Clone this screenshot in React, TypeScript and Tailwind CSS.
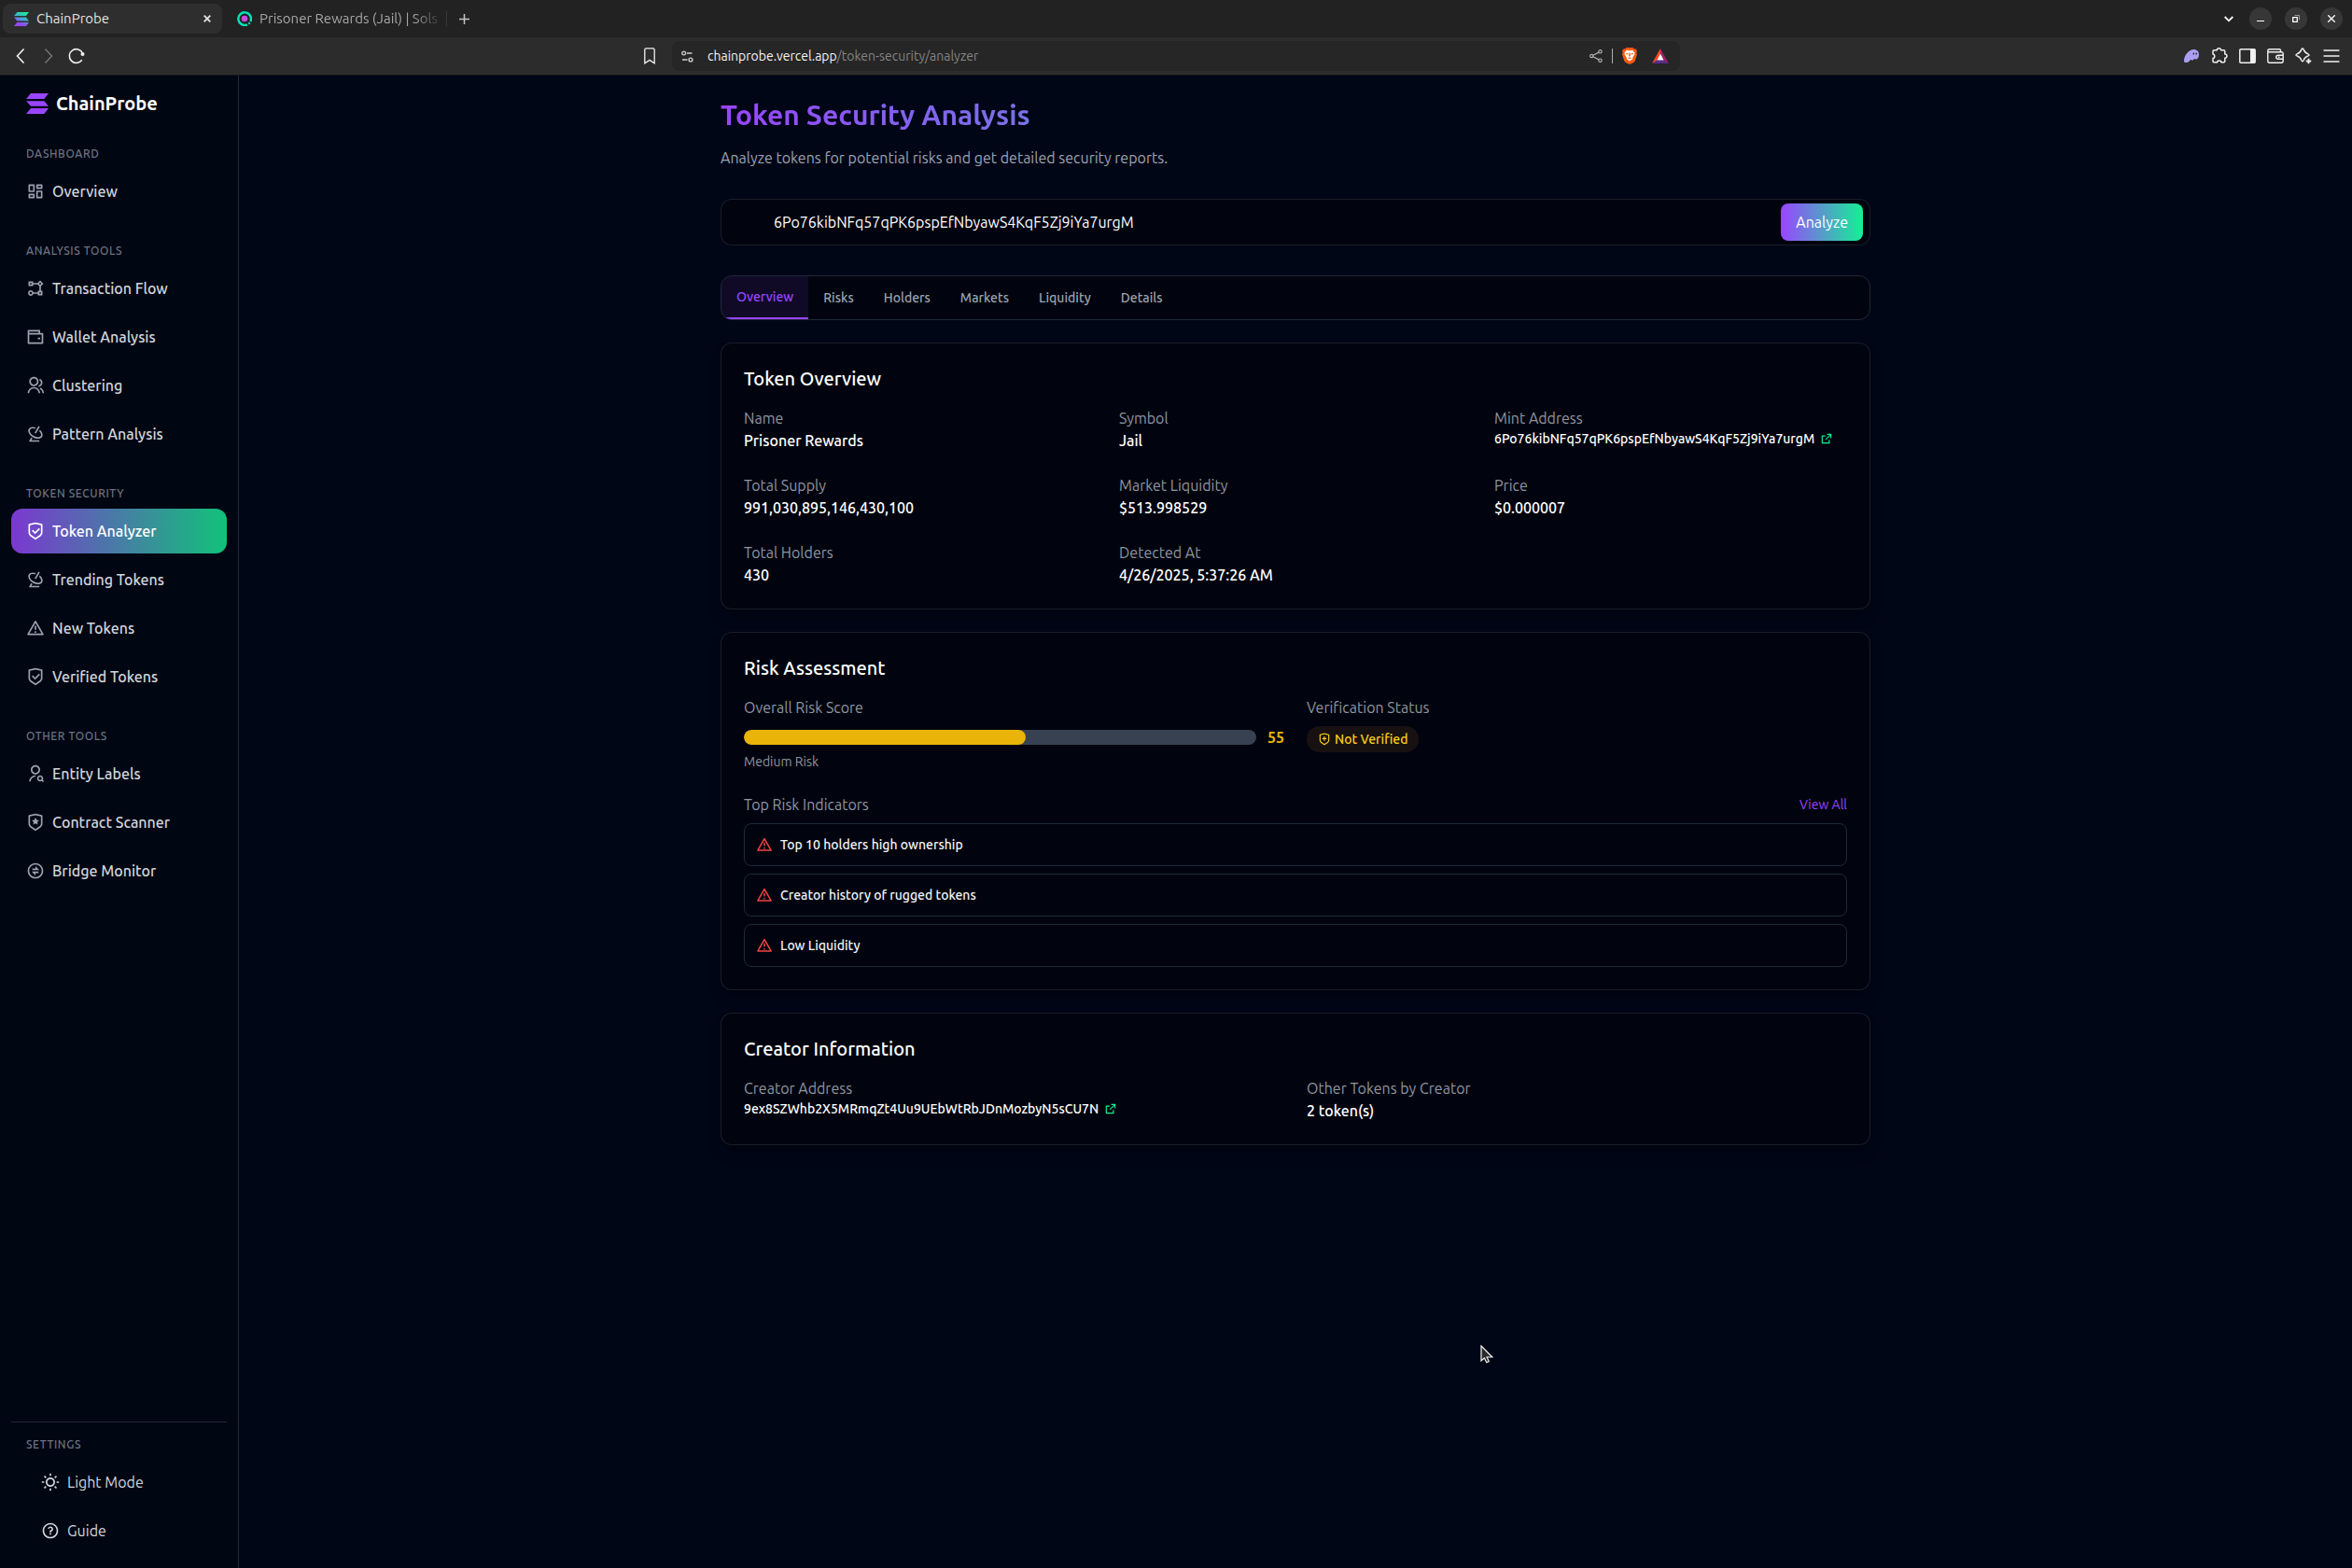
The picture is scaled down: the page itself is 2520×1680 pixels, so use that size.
import { useState } from 'react'
import type { ReactNode } from 'react'
import type { IconType } from 'react-icons'
import {
  RiAlertLine,
  RiDashboardLine,
  RiExchangeLine,
  RiExternalLinkLine,
  RiFlowChart,
  RiGroupLine,
  RiQuestionLine,
  RiRadarLine,
  RiShieldCheckLine,
  RiShieldCrossLine,
  RiShieldStarLine,
  RiSunLine,
  RiUserSearchLine,
  RiWalletLine,
} from 'react-icons/ri'

interface NavItem {
  readonly label: string
  readonly icon: IconType
}

interface NavSection {
  readonly title: string
  readonly items: readonly NavItem[]
}

const NAV_SECTIONS: readonly NavSection[] = [
  { title: 'Dashboard', items: [{ label: 'Overview', icon: RiDashboardLine }] },
  {
    title: 'Analysis Tools',
    items: [
      { label: 'Transaction Flow', icon: RiFlowChart },
      { label: 'Wallet Analysis', icon: RiWalletLine },
      { label: 'Clustering', icon: RiGroupLine },
      { label: 'Pattern Analysis', icon: RiRadarLine },
    ],
  },
  {
    title: 'Token Security',
    items: [
      { label: 'Token Analyzer', icon: RiShieldCheckLine },
      { label: 'Trending Tokens', icon: RiRadarLine },
      { label: 'New Tokens', icon: RiAlertLine },
      { label: 'Verified Tokens', icon: RiShieldCheckLine },
    ],
  },
  {
    title: 'Other Tools',
    items: [
      { label: 'Entity Labels', icon: RiUserSearchLine },
      { label: 'Contract Scanner', icon: RiShieldStarLine },
      { label: 'Bridge Monitor', icon: RiExchangeLine },
    ],
  },
]

const TABS = ['Overview', 'Risks', 'Holders', 'Markets', 'Liquidity', 'Details']

const RISKS = ['Top 10 holders high ownership', 'Creator history of rugged tokens', 'Low Liquidity']

const MINT_ADDRESS = '6Po76kibNFq57qPK6pspEfNbyawS4KqF5Zj9iYa7urgM'
const CREATOR_ADDRESS = '9ex8SZWhb2X5MRmqZt4Uu9UEbWtRbJDnMozbyN5sCU7N'
const RISK_SCORE = 55

function SolanaMark({ className, gradient }: { readonly className: string; readonly gradient?: boolean }) {
  return (
    <svg viewBox="0 0 24 22" className={className} fill={gradient ? 'url(#mark-gradient)' : '#9945ff'} preserveAspectRatio="none">
      {gradient && (
        <defs>
          <linearGradient id="mark-gradient" gradientUnits="userSpaceOnUse" x1="18" y1="0" x2="8" y2="22">
            <stop offset="0" stopColor="#14f195" />
            <stop offset="0.5" stopColor="#4aa3d0" />
            <stop offset="0.75" stopColor="#8a52f5" />
            <stop offset="1" stopColor="#9945ff" />
          </linearGradient>
        </defs>
      )}
      <path d="M5 0h19l-4.600 6H0z" />
      <path d="M0 8.200h19.400L24 13.800H5z" />
      <path d="M5 16h19l-4.600 6H0z" />
    </svg>
  )
}

function BraveMark() {
  return (
    <svg width="16" height="18" viewBox="0 0 16 18">
      <path d="M4.500 0h7l1.300 1.500 1.500-.2L16 3.400l-.6 2L16 7l-2.200 7.300-1.500 1.700L8 18l-4.300-2-1.500-1.700L0 7l.6-1.600-.6-2 1.700-2.100 1.500.2z" fill="#fb5a12" />
      <path d="M4.800 2.800 8 3.300l3.200-.5 2.300 2.600-.4 2.300-2 3 .3 1.400-3.400 2.300-3.400-2.300.3-1.400-2-3-.4-2.300z" fill="#fff" />
      <path d="M3.800 6 6.600 6.300 6.200 7.400 4.600 7.200zM12.200 6 9.400 6.300 9.800 7.400 11.400 7.200zM7.500 5.400h1L8.900 9 8 9.800 7.100 9zM5.600 11 8 10.600 10.400 11 8 12z" fill="#fb5a12" />
    </svg>
  )
}

function BatMark() {
  return (
    <svg width="18" height="16" viewBox="0 0 18 16">
      <path d="M9 0 0 16l5.500-3.600L9 5.600z" fill="#ff4724" />
      <path d="M9 0v5.600l3.500 6.800L18 16z" fill="#9e1f63" />
      <path d="m0 16 5.500-3.600h7L18 16z" fill="#5b2d8c" />
      <path d="m9 5.600 3.600 6.800H5.400z" fill="#fff" />
    </svg>
  )
}

interface ChromeButtonProps {
  readonly label: string
  readonly className?: string
  readonly children: ReactNode
}

function ChromeButton({ label, className = '', children }: ChromeButtonProps) {
  return (
    <button type="button" aria-label={label} className={`flex items-center justify-center cursor-pointer ${className}`}>
      {children}
    </button>
  )
}

function TabStrip() {
  return (
    <div className="flex h-10 items-center bg-[#222222] pl-[3px] pr-2.5 text-[#e3e3e3]">
      <div className="flex h-8 w-[235px] items-center rounded-lg bg-[#2e2e2e] pl-3 pr-2">
        <SolanaMark className="h-[15px] w-4 shrink-0" gradient />
        <span className="ml-2 flex-1 text-[15px]">ChainProbe</span>
        <ChromeButton label="Close tab" className="h-4 w-4">
          <svg width="8" height="8" viewBox="0 0 8 8" stroke="currentColor" strokeWidth="1.800">
            <path d="m.7.7 6.600 6.600M7.300.7.7 7.300" />
          </svg>
        </ChromeButton>
      </div>
      <div className="flex h-8 w-[241px] items-center pl-4">
        <svg width="16" height="16" viewBox="0 0 16 16" className="shrink-0" fill="none">
          <path d="M11 14.300A6.800 6.800 0 1 1 14.300 11" stroke="#00e5b8" strokeWidth="2.400" />
          <path d="m12.300 12.300 1.500 1.500" stroke="#00e5b8" strokeWidth="2.200" />
          <circle cx="8" cy="8" r="3.300" fill="#c74ae3" />
        </svg>
        <span className="ml-2 whitespace-nowrap text-[15px] text-[#a8a8a8] [mask-image:linear-gradient(to_right,#000_86%,#0003)]">
          Prisoner Rewards (Jail) | Sols
        </span>
        <span className="ml-auto h-4 w-px bg-[#383838]" />
      </div>
      <ChromeButton label="New tab" className="ml-1.5 h-6 w-6 text-[#c4c4c4]">
        <svg width="11" height="11" viewBox="0 0 11 11" stroke="currentColor" strokeWidth="1.500">
          <path d="M5.500 0v11M0 5.500h11" />
        </svg>
      </ChromeButton>
      <div className="ml-auto flex items-center gap-3.5 text-white">
        <ChromeButton label="Search tabs" className="-mr-1 h-6 w-6">
          <svg width="10" height="7" viewBox="0 0 10 7" fill="none" stroke="currentColor" strokeWidth="1.800">
            <path d="m.7 1 4.300 4.300L9.300 1" />
          </svg>
        </ChromeButton>
        <ChromeButton label="Minimize" className="h-6 w-6 rounded-full bg-[#373737]">
          <svg width="8" height="8" viewBox="0 0 8 8" stroke="currentColor">
            <path d="M0 6.500h8" />
          </svg>
        </ChromeButton>
        <ChromeButton label="Restore" className="h-6 w-6 rounded-full bg-[#373737]">
          <svg width="8" height="8" viewBox="0 0 8 8" fill="none" stroke="currentColor">
            <path d="M.7 2.700h4.600v4.600H.7z" strokeWidth="1.300" />
            <path d="M2.500.5h5v5" strokeOpacity="0.500" />
          </svg>
        </ChromeButton>
        <ChromeButton label="Close window" className="h-6 w-6 rounded-full bg-[#373737]">
          <svg width="8" height="8" viewBox="0 0 8 8" stroke="currentColor" strokeWidth="1.300">
            <path d="m.3.3 7.400 7.400M7.700.3.3 7.700" />
          </svg>
        </ChromeButton>
      </div>
    </div>
  )
}

function Toolbar() {
  return (
    <div className="flex h-[41px] items-center border-b border-[#161616] bg-[#2c2c2c] px-2.5 text-[#f0f0f0]">
      <div className="flex flex-1 items-center">
        <ChromeButton label="Back" className="h-6 w-6">
          <svg width="10" height="16" viewBox="0 0 10 16" fill="none" stroke="currentColor" strokeWidth="1.600">
            <path d="M8.500.5 1.500 8l7 7.500" />
          </svg>
        </ChromeButton>
        <ChromeButton label="Forward" className="ml-1.5 h-6 w-6 text-[#777777]">
          <svg width="10" height="16" viewBox="0 0 10 16" fill="none" stroke="currentColor" strokeWidth="1.400">
            <path d="m1.500.5 7 7.500-7 7.500" />
          </svg>
        </ChromeButton>
        <ChromeButton label="Reload" className="ml-1.5 h-6 w-6">
          <svg width="18" height="18" viewBox="0 0 18 18" fill="none" stroke="currentColor" strokeWidth="1.600">
            <path d="M14.800 13.300A7.400 7.400 0 1 1 15.600 6.200" />
            <circle cx="15.500" cy="7" r="2" fill="currentColor" stroke="none" />
          </svg>
        </ChromeButton>
        <ChromeButton label="Bookmark this tab" className="mr-3 ml-auto h-6 w-6">
          <svg width="12" height="18" viewBox="0 0 12 18" fill="none" stroke="currentColor" strokeWidth="1.300">
            <path d="M2.200.8h7.600c.8 0 1.400.6 1.400 1.400v14.600L6 13.400.8 16.800V2.200C.8 1.400 1.400.8 2.200.8z" />
          </svg>
        </ChromeButton>
      </div>
      <div className="flex h-8 shrink basis-[1080px] items-center rounded-lg bg-[#262626] pr-3 pl-2.5">
        <svg width="13" height="13" viewBox="0 0 13 13" fill="none" stroke="#d0d0d0" strokeWidth="1.400">
          <circle cx="2.700" cy="3" r="1.900" />
          <path d="M6 3h5.500M1 10h5.500" />
          <circle cx="10" cy="10" r="1.900" />
        </svg>
        <p className="ml-[15px] flex-1 text-sm text-[#858585]">
          <span className="text-[#f5f5f5]">chainprobe.vercel.app</span>/token-security/analyzer
        </p>
        <div className="flex items-center gap-2.5">
          <svg width="14" height="14" viewBox="0 0 14 14" fill="none" stroke="#b0b0b0" strokeWidth="1.200">
            <circle cx="2.300" cy="7" r="1.600" />
            <circle cx="11.500" cy="2.300" r="1.700" />
            <circle cx="11.500" cy="11.700" r="1.700" />
            <path d="m3.800 6.300 6.200-3.200M3.800 7.700l6.200 3.200" />
          </svg>
          <span className="h-4 w-px bg-[#b0b0b0]" />
          <BraveMark />
          <span className="pl-1.5">
            <BatMark />
          </span>
        </div>
      </div>
      <div className="flex flex-1 items-center justify-end gap-1.5">
        <ChromeButton label="Wallet extension" className="h-6 w-6">
          <svg width="16" height="14" viewBox="0 0 16 14">
            <path d="M0 12.400C0 7 4.600 0 10.500 0 14 0 16 2.300 16 5.200c0 3.300-1.600 5.300-3 5.300-.9 0-1.100-.6-1.600-.6-.7 0-1.200 1.700-2.600 1.700-.9 0-1-.7-1.500-.7-.8 0-1.800 3-4.600 3C1.100 13.900 0 13.500 0 12.400z" fill="#ab9ff2" />
            <ellipse cx="10.300" cy="4.600" rx="0.800" ry="1.100" fill="#2c2c2c" />
            <ellipse cx="13.200" cy="4.600" rx="0.800" ry="1.100" fill="#2c2c2c" />
          </svg>
        </ChromeButton>
        <ChromeButton label="Extensions" className="h-6 w-6">
          <svg width="18" height="18" viewBox="0 0 18 18" fill="none" stroke="currentColor" strokeWidth="1.500" strokeLinejoin="round">
            <path d="M3.200 2.800h3.100c0-2.700 4.300-2.700 4.300 0h3c.7 0 1.200.5 1.200 1.200v2.900c2.900 0 2.900 4.400 0 4.400v3.300c0 .7-.5 1.200-1.200 1.200h-2.700c0-2.300-4.300-2.300-4.300 0H3.200c-.7 0-1.200-.5-1.200-1.200v-3.100c2.400 0 2.400-4.400 0-4.400V4c0-.7.5-1.200 1.200-1.200z" />
          </svg>
        </ChromeButton>
        <ChromeButton label="Side panel" className="h-6 w-6">
          <svg width="18" height="16" viewBox="0 0 18 16" fill="none">
            <rect x="0.800" y="0.800" width="16.400" height="14.400" rx="1" stroke="currentColor" strokeWidth="1.500" />
            <path d="M12 1h5v14h-5z" fill="currentColor" />
          </svg>
        </ChromeButton>
        <ChromeButton label="Wallet" className="h-6 w-6">
          <svg width="18" height="16" viewBox="0 0 18 16" fill="none" stroke="currentColor" strokeWidth="1.400">
            <path d="M14.500 3.800V2c0-.7-.5-1.200-1.200-1.200H2.500C1.600.8.800 1.500.8 2.400v10.800c0 1.100.8 2 1.900 2h12.600c1 0 1.900-.9 1.900-2V5.500c0-1-.8-1.700-1.800-1.700H2.500C1.600 3.800.8 3.200.8 2.400" />
            <path d="M17 7.200h-5c-1.200 0-2.200.8-2.200 2s1 2 2.200 2h5M12 9.200h1.500" />
          </svg>
        </ChromeButton>
        <ChromeButton label="Assistant" className="h-6 w-6">
          <svg width="18" height="18" viewBox="0 0 18 18" fill="none" stroke="currentColor" strokeWidth="1.400" strokeLinejoin="round">
            <path d="M8 1c.5 0 .8.300 1 .8 1 3 2 4.100 5 5.100 1.300.4 1.300 1.600 0 2-3 1-4 2-5 5-.4 1.300-1.600 1.300-2 0-1-3-2-4-5-5-1.300-.4-1.300-1.600 0-2 3-1 4-2.100 5-5.100.2-.5.500-.8 1-.8z" />
            <path d="M14.500 11.800v5.400M11.800 14.500h5.400" strokeWidth="1.800" />
          </svg>
        </ChromeButton>
        <ChromeButton label="Menu" className="h-6 w-6">
          <svg width="18" height="14" viewBox="0 0 18 14" stroke="currentColor" strokeWidth="1.500">
            <path d="M.5 1h17M.5 7h17M.5 13h17" />
          </svg>
        </ChromeButton>
      </div>
    </div>
  )
}

function SectionTitle({ children }: { readonly children: ReactNode }) {
  return <h3 className="mb-2 px-4 text-xs font-medium uppercase tracking-wider text-[#6b7280]">{children}</h3>
}

function Sidebar() {
  return (
    <aside className="flex w-64 shrink-0 flex-col border-r border-[#1f2937] bg-[#010613]">
      <div className="flex h-[60px] items-center gap-2 px-7">
        <SolanaMark className="h-[22px] w-6" />
        <span className="text-xl font-bold text-white">ChainProbe</span>
      </div>
      <nav className="flex flex-1 flex-col gap-8 px-3 py-4">
        {NAV_SECTIONS.map((section) => (
          <div key={section.title}>
            <SectionTitle>{section.title}</SectionTitle>
            <ul className="flex flex-col gap-1">
              {section.items.map(({ label, icon: Icon }) => {
                const active = label === 'Token Analyzer'
                return (
                  <li key={label}>
                    <a
                      href="#"
                      aria-current={active ? 'page' : undefined}
                      className={`flex h-12 items-center gap-2 rounded-xl px-4 font-medium ${
                        active ? 'bg-linear-to-r/srgb from-[#7b38d0] to-[#12c27a] text-white' : 'text-[#d1d5db]'
                      }`}
                    >
                      <Icon size={20} className={active ? 'text-white' : 'text-[#9ca3af]'} />
                      {label}
                    </a>
                  </li>
                )
              })}
            </ul>
          </div>
        ))}
      </nav>
      <div className="mx-3 border-t border-[#1f2937] py-4">
        <SectionTitle>Settings</SectionTitle>
        <div className="flex flex-col gap-1 px-4 text-[#d1d5db]">
          <button type="button" className="flex h-12 items-center gap-2 px-4 cursor-pointer">
            <RiSunLine size={20} />
            Light Mode
          </button>
          <button type="button" className="flex h-12 items-center gap-2 px-4 cursor-pointer">
            <RiQuestionLine size={20} />
            Guide
          </button>
        </div>
      </div>
    </aside>
  )
}

function Card({ title, children }: { readonly title: string; readonly children: ReactNode }) {
  return (
    <section className="rounded-xl border border-white/10 bg-[#01040f] p-6 shadow-lg shadow-black/30">
      <h2 className="mb-4 text-xl font-medium text-white">{title}</h2>
      {children}
    </section>
  )
}

interface FieldProps {
  readonly label: string
  readonly value: string
  readonly address?: boolean
}

function Field({ label, value, address }: FieldProps) {
  return (
    <div className="h-12">
      <p className="text-[#9095a0]">{label}</p>
      {address ? (
        <p className="flex items-center gap-1.5 text-sm font-medium text-white">
          {value}
          <a href="#" aria-label={`Open ${label}`} className="text-[#14f195]">
            <RiExternalLinkLine size={14} />
          </a>
        </p>
      ) : (
        <p className="font-medium text-white">{value}</p>
      )}
    </div>
  )
}

function Analyzer() {
  const [address, setAddress] = useState(MINT_ADDRESS)
  const [tab, setTab] = useState('Overview')

  return (
    <main className="min-w-0 flex-1">
      <div className="mx-auto max-w-7xl p-6">
        <h1 className="mb-4 bg-linear-to-r/srgb from-[#9945ff] to-[#14f195] bg-clip-text text-3xl font-bold text-transparent">
          Token Security Analysis
        </h1>
        <p className="mb-8 text-[#9ca3af]">Analyze tokens for potential risks and get detailed security reports.</p>

        <form
          onSubmit={(e) => e.preventDefault()}
          className="mb-8 flex h-[50px] items-center rounded-xl border border-white/10 bg-[#01040f] pr-[7px]"
        >
          <input
            type="text"
            aria-label="Token address"
            value={address}
            onChange={(e) => setAddress(e.target.value)}
            className="min-w-0 flex-1 bg-transparent pl-14 text-white focus:outline-none"
          />
          <button
            type="submit"
            className="h-10 rounded-lg bg-linear-to-r/srgb from-[#9945ff] to-[#14f195] px-4 text-white cursor-pointer"
          >
            Analyze
          </button>
        </form>

        <div role="tablist" className="mb-6 flex overflow-hidden rounded-xl border border-[#1f2937] bg-[#01040f]">
          {TABS.map((name) => (
            <button
              key={name}
              type="button"
              role="tab"
              aria-selected={tab === name}
              onClick={() => setTab(name)}
              className={`px-4 py-3 text-sm font-medium cursor-pointer ${
                tab === name ? 'border-b-2 border-[#9945ff] bg-[#9945ff]/10 text-[#9945ff]' : 'text-[#9ca3af]'
              }`}
            >
              {name}
            </button>
          ))}
        </div>

        <div className="flex flex-col gap-6">
          <Card title="Token Overview">
            <div className="grid grid-cols-3 gap-6">
              <Field label="Name" value="Prisoner Rewards" />
              <Field label="Symbol" value="Jail" />
              <Field label="Mint Address" value={MINT_ADDRESS} address />
              <Field label="Total Supply" value="991,030,895,146,430,100" />
              <Field label="Market Liquidity" value="$513.998529" />
              <Field label="Price" value="$0.000007" />
              <Field label="Total Holders" value="430" />
              <Field label="Detected At" value="4/26/2025, 5:37:26 AM" />
            </div>
          </Card>

          <Card title="Risk Assessment">
            <div className="mb-6 grid grid-cols-2 gap-6">
              <div>
                <p className="mb-2 text-[#9095a0]">Overall Risk Score</p>
                <div className="flex items-center gap-3">
                  <div className="h-4 flex-1 overflow-hidden rounded-full bg-[#374151]">
                    <div className="h-full rounded-full bg-[#eab308]" style={{ width: `${RISK_SCORE}%` }} />
                  </div>
                  <span className="font-bold text-[#eab308]">{RISK_SCORE}</span>
                </div>
                <p className="mt-1 text-sm text-[#9095a0]">Medium Risk</p>
              </div>
              <div>
                <p className="mb-2 text-[#9095a0]">Verification Status</p>
                <span className="inline-flex items-center gap-1 rounded-full bg-[#181112] px-3 py-1 text-sm font-medium text-[#facc15]">
                  <RiShieldCrossLine size={14} />
                  Not Verified
                </span>
              </div>
            </div>
            <div className="mb-2 flex items-center justify-between">
              <p className="text-[#9095a0]">Top Risk Indicators</p>
              <a href="#" className="text-sm text-[#9945ff]">
                View All
              </a>
            </div>
            <ul className="flex flex-col gap-2">
              {RISKS.map((risk) => (
                <li key={risk} className="flex items-center gap-2 rounded-lg border border-[#1f2937] p-3 text-sm font-medium text-[#f3f4f6]">
                  <RiAlertLine size={18} className="text-[#ef4444]" />
                  {risk}
                </li>
              ))}
            </ul>
          </Card>

          <Card title="Creator Information">
            <div className="grid grid-cols-2 gap-6">
              <Field label="Creator Address" value={CREATOR_ADDRESS} address />
              <Field label="Other Tokens by Creator" value="2 token(s)" />
            </div>
          </Card>
        </div>
      </div>
    </main>
  )
}

export default function App() {
  return (
    <div className="relative flex min-h-screen flex-col bg-[#010617] font-['Ubuntu','Roboto',sans-serif]">
      <TabStrip />
      <Toolbar />
      <div className="flex flex-1">
        <Sidebar />
        <Analyzer />
      </div>
      {/* mouse pointer */}
      <svg width="14" height="20" viewBox="0 0 14 20" className="absolute top-[1441px] left-[1586px]">
        <path d="M1 1v16l3.400-3 2.300 4.800 2.600-1.200-2.200-4.600H12.800z" fill="#2a2a2a" stroke="#f2f2f2" strokeWidth="1.200" />
      </svg>
    </div>
  )
}
